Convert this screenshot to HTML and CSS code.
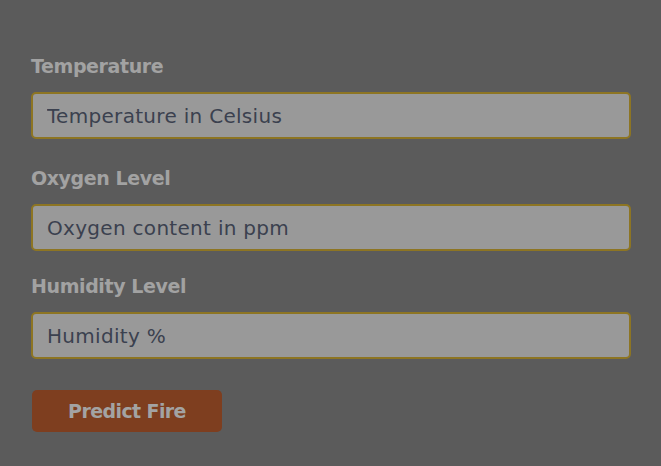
FILE: index.html
```html
<!DOCTYPE html>
<html lang="en">
<head>
<meta charset="utf-8">
<title>Predict Fire</title>
<link rel="stylesheet" href="styles.css">
</head>
<body>
<form class="form">
  <div class="group">
    <label class="label" for="t">Temperature</label>
    <input class="field" id="t" type="text" placeholder="Temperature in Celsius">
  </div>
  <div class="group">
    <label class="label" for="o">Oxygen Level</label>
    <input class="field" id="o" type="text" placeholder="Oxygen content in ppm">
  </div>
  <div class="group">
    <label class="label" for="h">Humidity Level</label>
    <input class="field" id="h" type="text" placeholder="Humidity %">
  </div>
  <button class="btn" type="button">Predict Fire</button>
</form>
</body>
</html>
```

FILE: styles.css
```css
html, body {
  margin: 0;
  padding: 0;
  background: #5b5b5b;
  height: 100%;
  overflow: hidden;
}
.form {
  display: flex;
  flex-direction: column;
  align-items: flex-start;
  padding: 54px 30px 0 31px;
  font-family: "DejaVu Sans", sans-serif;
}
.group {
  display: flex;
  flex-direction: column;
  width: 600px;
  margin-bottom: 23px;
}
.group:first-child {
  margin-bottom: 27px;
}
.label {
  color: #a2a2a2;
  font-size: 19px;
  font-weight: bold;
  line-height: 24px;
  margin-bottom: 14px;
  letter-spacing: -0.4px;
}
.field {
  box-sizing: border-box;
  width: 600px;
  height: 47px;
  border: 2px solid #8d7523;
  border-radius: 5px;
  background: #999999;
  padding: 0 14px;
  font-family: "DejaVu Sans", sans-serif;
  font-size: 20px;
  letter-spacing: 0.3px;
  color: #3b414f;
  outline: none;
}
.field::placeholder {
  color: #3b414f;
  opacity: 1;
}
.btn {
  margin-top: 8px;
  margin-left: 1px;
  width: 190px;
  height: 42px;
  border: none;
  border-radius: 5px;
  background: #7e3e1f;
  color: #a3a3a3;
  font-family: "DejaVu Sans", sans-serif;
  font-size: 19px;
  font-weight: bold;
  letter-spacing: -0.6px;
}
```
